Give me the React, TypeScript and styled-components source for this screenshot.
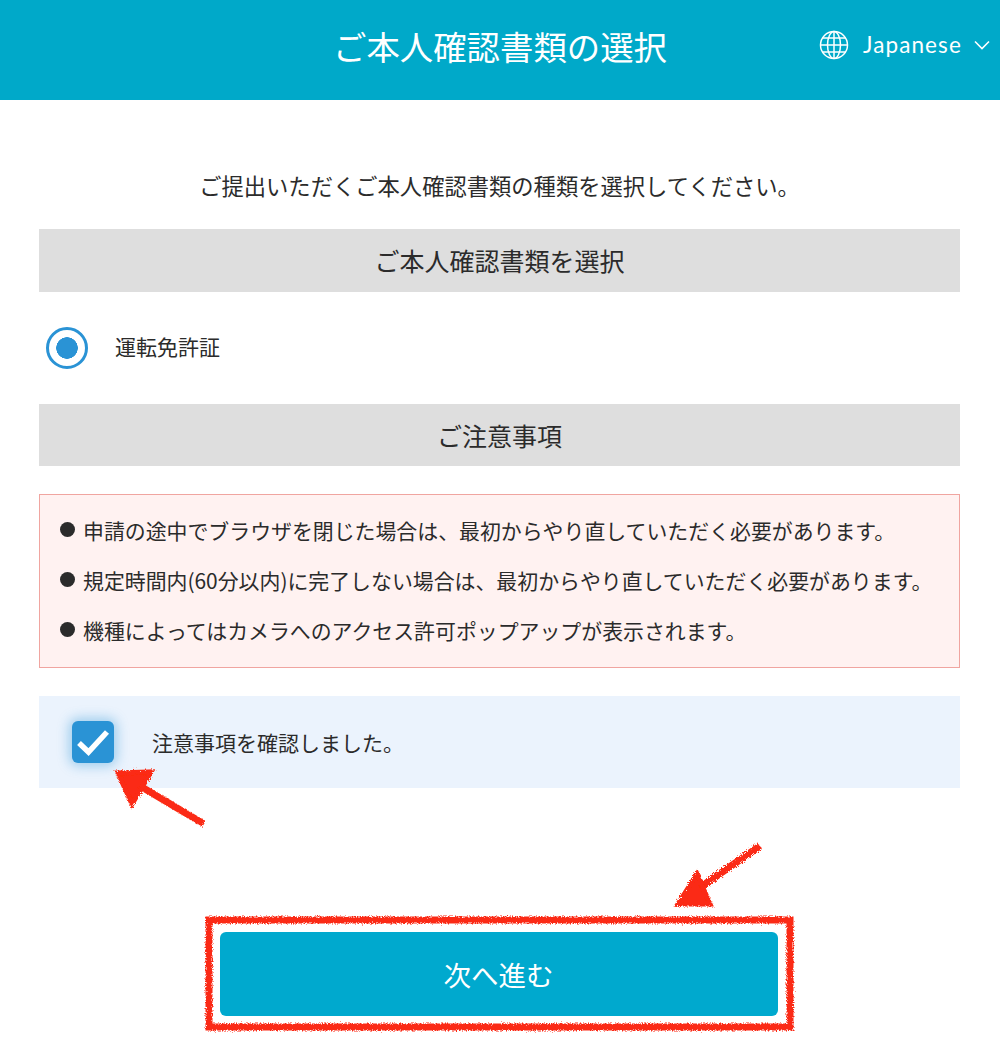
import styled, {createGlobalStyle} from 'styled-components';

const GlobalStyle = createGlobalStyle`
  html, body {
    margin: 0;
    padding: 0;
    background: #fff;
    color: #2b2b2b;
    font-family: "Noto Sans CJK JP", "Noto Sans", sans-serif;
  }
`;

const notes = [
    '申請の途中でブラウザを閉じた場合は、最初からやり直していただく必要があります。',
    '規定時間内(60分以内)に完了しない場合は、最初からやり直していただく必要があります。',
    '機種によってはカメラへのアクセス許可ポップアップが表示されます。',
];

const App = () => {
    return <Page>
        <GlobalStyle/>
        <Header>
            <Title>ご本人確認書類の選択</Title>
            <Language>
                <svg width="30" height="30" viewBox="0 0 30 30" fill="none" stroke="#fff" strokeWidth="1.5">
                    <circle cx="15" cy="15" r="13.5"/>
                    <ellipse cx="15" cy="15" rx="6.5" ry="13.5"/>
                    <path d="M15 1.5V28.5M1.5 15H28.5M3.5 8H26.5M3.5 22H26.5"/>
                </svg>
                <LanguageName>Japanese</LanguageName>
                <svg width="16" height="10" viewBox="0 0 16 10" fill="none" stroke="#fff" strokeWidth="1.6">
                    <path d="M1 1.5L8 8.5L15 1.5"/>
                </svg>
            </Language>
        </Header>

        <Main>
            <Lead>ご提出いただくご本人確認書類の種類を選択してください。</Lead>
            <SectionHeading>ご本人確認書類を選択</SectionHeading>
            <RadioRow>
                <Radio/>
                <RadioLabel>運転免許証</RadioLabel>
            </RadioRow>
            <SectionHeading>ご注意事項</SectionHeading>
            <Notice>
                {notes.map(note => <NoticeItem key={note}>{note}</NoticeItem>)}
            </Notice>
            <Confirm>
                <CheckBox>
                    <svg width="34" height="28" viewBox="0 0 34 28" fill="none" stroke="#fff" strokeWidth="5.5">
                        <path d="M3 15L12.5 24L31 4"/>
                    </svg>
                </CheckBox>
                <ConfirmLabel>注意事項を確認しました。</ConfirmLabel>
            </Confirm>
            <NextButton type="button">次へ進む</NextButton>
        </Main>

        <Marks viewBox="0 0 1000 1056" width="1000" height="1056">
            <defs>
                <filter id="rough" x="-5%" y="-5%" width="110%" height="110%">
                    <feTurbulence type="fractalNoise" baseFrequency="0.8" numOctaves="2" seed="4"/>
                    <feDisplacementMap in="SourceGraphic" scale="5"/>
                </filter>
            </defs>
            <g filter="url(#rough)" fill="#fb2a12" stroke="#fb2a12">
                <path d="M204 824L140 786" strokeWidth="7" fill="none"/>
                <path d="M118 773L151 772L132 804Z" strokeWidth="5"/>
                <path d="M760 846L702 886" strokeWidth="7" fill="none"/>
                <path d="M697 874L678 904L710 904Z" strokeWidth="5"/>
                <rect x="209" y="920" width="581" height="107" fill="none" strokeWidth="7"/>
            </g>
        </Marks>
    </Page>;
};

export default App;


const Page = styled.div`
  position: relative;
  width: 1000px;
  height: 1056px;
  overflow: hidden;
`;

const Header = styled.header`
  position: relative;
  display: flex;
  align-items: center;
  justify-content: center;
  height: 100px;
  background: #00a9c9;
  color: #fff;
`;

const Title = styled.h1`
  margin: 0 0 9px;
  font-size: 33.4px;
  font-weight: 400;
  line-height: 1;
`;

const Language = styled.div`
  position: absolute;
  top: 30px;
  left: 819px;
  display: flex;
  align-items: center;
`;

const LanguageName = styled.span`
  margin: 0 12px 0 14px;
  font-family: Lato, sans-serif;
  font-size: 22.5px;
  letter-spacing: 1.1px;
  line-height: 30px;
`;

const Main = styled.main`
  display: flex;
  flex-direction: column;
  padding: 0 40px 0 39px;
`;

const Lead = styled.p`
  margin: 68px 0 26px;
  font-size: 22.3px;
  line-height: 35px;
  text-align: center;
`;

const SectionHeading = styled.h2`
  margin: 0;
  height: 62.5px;
  background: #dedede;
  font-size: 25px;
  font-weight: 400;
  line-height: 62px;
  text-align: center;
`;

const RadioRow = styled.div`
  display: flex;
  align-items: center;
  height: 112px;
  padding-left: 7px;
`;

const Radio = styled.span`
  display: flex;
  width: 42px;
  height: 42px;
  box-sizing: border-box;
  border: 3px solid #2a93d5;
  border-radius: 50%;
  background: radial-gradient(circle, #2a93d5 0 10.5px, #fff 11px);
`;

const RadioLabel = styled.span`
  margin: 0 0 3px 27px;
  font-size: 21px;
  line-height: 30px;
`;

const Notice = styled.ul`
  display: flex;
  flex-direction: column;
  gap: 20px;
  height: 174px;
  box-sizing: border-box;
  margin: 28px 0;
  padding: 20px 0 0 20px;
  border: 1px solid #f0a5a0;
  background: #fff2f1;
  list-style: none;
`;

const NoticeItem = styled.li`
  display: flex;
  align-items: flex-start;
  gap: 8px;
  font-size: 20.9px;
  line-height: 30px;
  white-space: nowrap;

  &::before {
    content: "";
    flex: none;
    width: 15px;
    height: 15px;
    margin-top: 7px;
    border-radius: 50%;
    background: #2b2b2b;
  }
`;

const Confirm = styled.div`
  display: flex;
  align-items: center;
  height: 92px;
  padding-left: 33px;
  background: #ebf3fd;
`;

const CheckBox = styled.span`
  display: flex;
  align-items: center;
  justify-content: center;
  width: 42px;
  height: 42px;
  border-radius: 6px;
  background: #2a93d5;
  box-shadow: 0 0 12px 3px rgba(42, 147, 213, 0.4);
`;

const ConfirmLabel = styled.span`
  margin-left: 38px;
  font-size: 21px;
  line-height: 30px;
`;

const NextButton = styled.button`
  align-self: center;
  width: 558px;
  height: 84px;
  margin: 144px 0 0 -2px;
  padding: 0;
  border: 0;
  border-radius: 6px;
  background: #00a9ce;
  color: #fff;
  font-family: inherit;
  font-size: 27.5px;
`;

const Marks = styled.svg`
  position: absolute;
  top: 0;
  left: 0;
  pointer-events: none;
`;
